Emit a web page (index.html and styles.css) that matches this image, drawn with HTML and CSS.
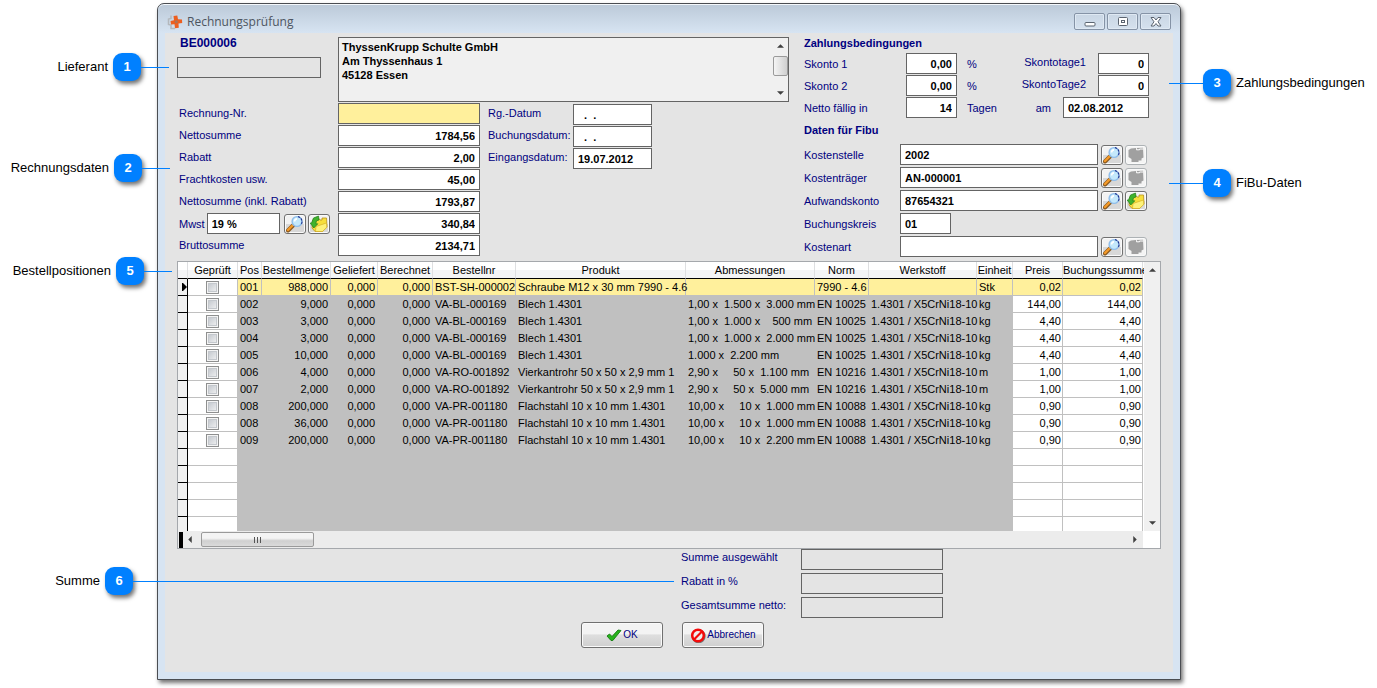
FILE: index.html
```html
<!DOCTYPE html>
<html lang="de">
<head>
<meta charset="utf-8">
<title>Rechnungsprüfung</title>
<link rel="stylesheet" href="styles.css">
</head>
<body>
<svg class="defs" aria-hidden="true">
  <defs>
    <symbol id="lens" viewBox="0 0 20 18">
      <path d="M3 15.5 8.5 10" stroke="#8a5a20" stroke-width="4" stroke-linecap="round"/>
      <path d="M3 15 8 10" stroke="#f59a28" stroke-width="2.4" stroke-linecap="round"/>
      <circle cx="12" cy="6.5" r="4.9" fill="#c4e8fb" stroke="#8fbdea" stroke-width="1.4"/>
      <path d="M13 1.6a5.2 5.2 0 0 1 3.4 7.6" fill="none" stroke="#1c2f8c" stroke-width="1.1" stroke-dasharray="2.4 1"/>
      <path d="M9.6 6.5a2.6 2.6 0 0 1 2.4-2.6" fill="none" stroke="#fff" stroke-width="1.6"/>
    </symbol>
    <symbol id="folder" viewBox="0 0 20 18">
      <path d="M4 4.5 10 3.5 11 5h2V3h4.500l.5 9-4.500 4.500H6L3 13z" fill="#f7df3c" stroke="#b9921c" stroke-width=".8"/>
      <path d="M7 11.500 17.500 8 17.800 12.500 13.500 16.500H6.500z" fill="#fdf27a" stroke="#d0a820" stroke-width=".6"/>
      <path d="M9.500 1 4.500 3 2.500 8H1.200l3.600 5 4-4.200H6.800L7.500 5.800 10 5z" fill="#3fb32c" stroke="#1f7d18" stroke-width=".7"/>
    </symbol>
    <symbol id="folder-off" viewBox="0 0 20 18">
      <path d="M2.500 4 5 2.500 10 2 17 1.800 17.500 11.500 15.500 12.500v2h-3v1.500H5.500V13L2.500 11z" fill="#a0a0a0"/>
      <path d="M10.500 2.200v1.600h3V3H17" fill="none" stroke="#fff" stroke-width="1"/>
    </symbol>
  </defs>
</svg>

<main class="window">
  <header class="titlebar">
    <svg class="logo" viewBox="0 0 16 16" aria-hidden="true">
      <path d="M4 1.500v3L1.500 5v5.500L4 11v3.500h4" fill="none" stroke="#b4b8bd" stroke-width="1.500"/>
      <path d="M6.500 2 10.300 1.500 11 5.300 15 5.500 15.200 9l-3.700.5.300 4.300-3.800.5L7.500 10.300 4 10.500 3.500 7 7 6.300z" fill="#ec5f20"/>
      <circle cx="9.300" cy="7.800" r="1.500" fill="#a9745a"/>
    </svg>
    <h1 class="caption">Rechnungsprüfung</h1>
    <div class="winbuttons">
      <button class="winbtn" aria-label="Minimieren"><svg viewBox="0 0 14 12"><rect x="2" y="6.500" width="10" height="3.500" rx="1" fill="#fff" stroke="#5b6470"/></svg></button>
      <button class="winbtn" aria-label="Maximieren"><svg viewBox="0 0 14 12"><rect x="2.500" y="1.500" width="9" height="8" rx="1" fill="#fff" stroke="#5b6470"/><rect x="5.500" y="4.500" width="3" height="2" fill="#fff" stroke="#5b6470"/></svg></button>
      <button class="winbtn" aria-label="Schließen"><svg viewBox="0 0 14 12"><path d="M2 1.500h3L7 4l2-2.500h3L9 5.800l3 4.200H9L7 7.500 5 10H2l3-4.200z" fill="#fff" stroke="#5b6470"/></svg></button>
    </div>
  </header>

  <form class="client">
    <div class="top">
      <section class="invoice">
        <div class="supplier">
          <div class="supplier-id">
            <label class="heading order" for="lieferant">BE000006</label>
            <input class="field flat" id="lieferant">
          </div>
          <div class="address">
            <textarea class="address-text" aria-label="Adresse" readonly>ThyssenKrupp Schulte GmbH
Am Thyssenhaus 1
45128 Essen</textarea>
            <div class="vscroll small">
              <svg class="arrow" viewBox="0 0 8 4"><path d="M0 4 4 0l4 4z"/></svg>
              <div class="vthumb"></div>
              <svg class="arrow last" viewBox="0 0 8 4"><path d="M0 0h8L4 4z"/></svg>
            </div>
          </div>
        </div>
        <div class="figures">
          <div class="sums">
            <label for="renr">Rechnung-Nr.</label><input class="field num current" id="renr">
            <label for="netto">Nettosumme</label><input class="field num" id="netto" value="1784,56">
            <label for="rabatt">Rabatt</label><input class="field num" id="rabatt" value="2,00">
            <label for="fracht">Frachtkosten usw.</label><input class="field num" id="fracht" value="45,00">
            <label for="inkl">Nettosumme (inkl. Rabatt)</label><input class="field num" id="inkl" value="1793,87">
            <div class="vat">
              <label for="mwst">Mwst</label><input class="field" id="mwst" value="19 %">
              <button type="button" class="tool" aria-label="Mwst suchen"><svg><use href="#lens"/></svg></button>
              <button type="button" class="tool" aria-label="Mwst öffnen"><svg><use href="#folder"/></svg></button>
            </div><input class="field num" aria-label="Mwst Betrag" value="340,84">
            <label for="brutto">Bruttosumme</label><input class="field num" id="brutto" value="2134,71">
          </div>
          <div class="dates">
            <label for="rgdatum">Rg.-Datum</label><input class="field" id="rgdatum" value="  .  .">
            <label for="budatum">Buchungsdatum:</label><input class="field" id="budatum" value="  .  .">
            <label for="eidatum">Eingangsdatum:</label><input class="field" id="eidatum" value="19.07.2012">
          </div>
        </div>
      </section>

      <section class="terms">
        <h2 class="heading">Zahlungsbedingungen</h2>
        <div class="payment">
          <label for="sk1">Skonto 1</label><input class="field num" id="sk1" value="0,00"><span>%</span>
          <label class="end" for="st1">Skontotage1</label><input class="field num days" id="st1" value="0">
          <label for="sk2">Skonto 2</label><input class="field num" id="sk2" value="0,00"><span>%</span>
          <label class="end" for="st2">SkontoTage2</label><input class="field num days" id="st2" value="0">
          <label for="faellig">Netto fällig in</label><input class="field num" id="faellig" value="14"><span>Tagen</span>
          <div class="due"><label for="am">am</label><input class="field" id="am" value="02.08.2012"></div>
        </div>
        <h2 class="heading fibu-title">Daten für Fibu</h2>
        <div class="fibu">
          <label for="kst">Kostenstelle</label>
          <div class="pick"><input class="field" id="kst" value="2002"><button type="button" class="tool" aria-label="Kostenstelle suchen"><svg><use href="#lens"/></svg></button><button type="button" class="tool" disabled aria-label="Kostenstelle öffnen"><svg><use href="#folder-off"/></svg></button></div>
          <label for="ktr">Kostenträger</label>
          <div class="pick"><input class="field" id="ktr" value="AN-000001"><button type="button" class="tool" aria-label="Kostenträger suchen"><svg><use href="#lens"/></svg></button><button type="button" class="tool" disabled aria-label="Kostenträger öffnen"><svg><use href="#folder-off"/></svg></button></div>
          <label for="akt">Aufwandskonto</label>
          <div class="pick"><input class="field" id="akt" value="87654321"><button type="button" class="tool" aria-label="Aufwandskonto suchen"><svg><use href="#lens"/></svg></button><button type="button" class="tool" aria-label="Aufwandskonto öffnen"><svg><use href="#folder"/></svg></button></div>
          <label for="bkr">Buchungskreis</label>
          <div class="pick"><input class="field brief" id="bkr" value="01"></div>
          <label for="kart">Kostenart</label>
          <div class="pick"><input class="field" id="kart"><button type="button" class="tool" aria-label="Kostenart suchen"><svg><use href="#lens"/></svg></button><button type="button" class="tool" disabled aria-label="Kostenart öffnen"><svg><use href="#folder-off"/></svg></button></div>
        </div>
      </section>
    </div>

    <section class="grid">
      <div class="grid-main">
        <table class="items">
          <colgroup><col class="c-mark"><col class="c-check"><col class="c-pos"><col class="c-qty"><col class="c-del"><col class="c-inv"><col class="c-no"><col class="c-prod"><col class="c-dim"><col class="c-norm"><col class="c-mat"><col class="c-unit"><col class="c-price"><col class="c-sum"></colgroup>
          <thead><tr><th></th><th>Geprüft</th><th>Pos</th><th>Bestellmenge</th><th>Geliefert</th><th>Berechnet</th><th>Bestellnr</th><th>Produkt</th><th>Abmessungen</th><th>Norm</th><th>Werkstoff</th><th>Einheit</th><th>Preis</th><th>Buchungssumme</th></tr></thead>
          <tbody id="rows"></tbody>
        </table>
        <div class="vscroll">
          <svg class="arrow" viewBox="0 0 8 4"><path d="M0 4 4 0l4 4z"/></svg>
          <svg class="arrow last" viewBox="0 0 8 4"><path d="M0 0h8L4 4z"/></svg>
        </div>
      </div>
      <div class="hscroll">
        <span class="split"></span>
        <svg class="side" viewBox="0 0 4 8"><path d="M4 0v8L0 4z"/></svg>
        <div class="hthumb"><i></i><i></i><i></i></div>
        <svg class="side last" viewBox="0 0 4 8"><path d="M0 0v8l4-4z"/></svg>
      </div>
    </section>

    <section class="totals">
      <label for="t1">Summe ausgewählt</label><input class="field flat" id="t1">
      <label for="t2">Rabatt in %</label><input class="field flat" id="t2">
      <label for="t3">Gesamtsumme netto:</label><input class="field flat" id="t3">
    </section>

    <div class="actions">
      <button type="button" class="push">
        <svg class="push-icon" viewBox="0 0 16 14" aria-hidden="true"><path d="M1 7.500 3.500 5.500 6 8 12 1.500l3 .5L6.800 12H5z" fill="#27b31c" stroke="#137a10" stroke-width=".9" stroke-linejoin="round"/></svg>OK</button>
      <button type="button" class="push">
        <svg class="push-icon" viewBox="0 0 16 15" aria-hidden="true"><circle cx="8.600" cy="8.300" r="5.800" fill="none" stroke="#777" stroke-width="2.500"/><circle cx="8" cy="7.500" r="5.800" fill="#eee" stroke="#f40b0b" stroke-width="2.500"/><path d="m4 11.500 8-8" stroke="#f40b0b" stroke-width="2.200"/></svg>Abbrechen</button>
    </div>
  </form>
</main>

<div class="callout c1"><span class="callout-label">Lieferant</span><b class="badge">1</b><i class="line"></i></div>
<div class="callout c2"><span class="callout-label">Rechnungsdaten</span><b class="badge">2</b><i class="line"></i></div>
<div class="callout right c3"><i class="line"></i><b class="badge">3</b><span class="callout-label">Zahlungsbedingungen</span></div>
<div class="callout right c4"><i class="line"></i><b class="badge">4</b><span class="callout-label">FiBu-Daten</span></div>
<div class="callout c5"><span class="callout-label">Bestellpositionen</span><b class="badge">5</b><i class="line"></i></div>
<div class="callout c6"><span class="callout-label">Summe</span><b class="badge">6</b><i class="line"></i></div>
<script src="rows.js"></script>
</body>
</html>
```
FILE: rows.js
```js
const items = [
  ["001", "988,000", "BST-SH-000002", "Schraube M12 x 30 mm 7990 - 4.6", "", "7990 - 4.6", "", "Stk", "0,02"],
  ["002", "9,000", "VA-BL-000169", "Blech 1.4301", "1,00 x  1.500 x  3.000 mm", "EN 10025", "1.4301 / X5CrNi18-10", "kg", "144,00"],
  ["003", "3,000", "VA-BL-000169", "Blech 1.4301", "1,00 x  1.000 x    500 mm", "EN 10025", "1.4301 / X5CrNi18-10", "kg", "4,40"],
  ["004", "3,000", "VA-BL-000169", "Blech 1.4301", "1,00 x  1.000 x  2.000 mm", "EN 10025", "1.4301 / X5CrNi18-10", "kg", "4,40"],
  ["005", "10,000", "VA-BL-000169", "Blech 1.4301", "1.000 x  2.200 mm", "EN 10025", "1.4301 / X5CrNi18-10", "kg", "4,40"],
  ["006", "4,000", "VA-RO-001892", "Vierkantrohr 50 x 50 x 2,9 mm 1", "2,90 x     50 x  1.100 mm", "EN 10216", "1.4301 / X5CrNi18-10", "m", "1,00"],
  ["007", "2,000", "VA-RO-001892", "Vierkantrohr 50 x 50 x 2,9 mm 1", "2,90 x     50 x  5.000 mm", "EN 10216", "1.4301 / X5CrNi18-10", "m", "1,00"],
  ["008", "200,000", "VA-PR-001180", "Flachstahl 10 x 10 mm 1.4301", "10,00 x     10 x  1.000 mm", "EN 10088", "1.4301 / X5CrNi18-10", "kg", "0,90"],
  ["008", "36,000", "VA-PR-001180", "Flachstahl 10 x 10 mm 1.4301", "10,00 x     10 x  1.000 mm", "EN 10088", "1.4301 / X5CrNi18-10", "kg", "0,90"],
  ["009", "200,000", "VA-PR-001180", "Flachstahl 10 x 10 mm 1.4301", "10,00 x     10 x  2.200 mm", "EN 10088", "1.4301 / X5CrNi18-10", "kg", "0,90"]
];
const body = document.getElementById("rows");
const cell = (text, cls) => `<td class="${cls}">${text}</td>`;
items.forEach(([pos, qty, no, prod, dim, norm, mat, unit, price], i) => {
  const mark = i === 0 ? '<svg class="pointer" viewBox="0 0 5 8"><path d="M0 0h1l4 4-4 4H0z"/></svg>' : "";
  body.insertAdjacentHTML("beforeend", `<tr class="${i === 0 ? "active" : ""}">` +
    cell(mark, "mark") +
    cell(`<input type="checkbox" class="tick" aria-label="Position ${pos} geprüft">`, "check") +
    cell(pos, "grey") + cell(qty, "grey r") + cell("0,000", "grey r") + cell("0,000", "grey r") +
    [no, prod, dim, norm, mat, unit].map(t => cell(t, "grey")).join("") +
    cell(price, "r edit") + cell(price, "r edit") + "</tr>");
});
for (let i = 0; i < 5; i++) {
  body.insertAdjacentHTML("beforeend", '<tr class="blank"><td class="mark"></td><td class="check"></td>' +
    '<td class="grey" colspan="10"></td><td class="edit"></td><td class="edit"></td></tr>');
}
```
FILE: styles.css
```css
* { box-sizing: border-box; }
body {
  position: relative;
  margin: 0;
  padding: 3px 196px 8px 157px;
  background: #fff;
  color: #000;
  font: 11px/14px "Liberation Sans", Arial, sans-serif;
}
.defs { position: absolute; width: 0; height: 0; }
button, input, textarea { font: inherit; margin: 0; }
label, .payment span { color: #000080; white-space: nowrap; }

.window {
  border: 1px solid #4a4d52;
  border-radius: 7px 7px 0 0;
  padding: 0 7px 7px;
  background: #d7e4f2;
  box-shadow: inset 0 1px #f4f8fc, 2px 3px 4px rgba(0, 0, 0, .55);
}
.titlebar {
  display: flex;
  align-items: center;
  height: 28px;
  margin: 1px -7px 0;
  padding: 5px 9px 0;
  border-radius: 6px 6px 0 0;
  background: linear-gradient(#bccad9, #d7e4f2);
}
.logo { width: 16px; height: 16px; }
.caption {
  flex: 1;
  margin: 0 0 0 4px;
  color: #4d5560;
  font: 12px/16px "Open Sans", "Noto Sans", sans-serif;
}
.winbuttons { display: flex; gap: 2px; }
.winbtn {
  display: flex;
  align-items: center;
  justify-content: center;
  width: 31px;
  height: 17px;
  padding: 0;
  border: 1px solid #8593a6;
  border-radius: 2px;
  background: linear-gradient(#c9d6e4, #d5e1ee);
  box-shadow: inset 0 0 0 1px #dfe9f3;
}
.winbtn svg { width: 14px; height: 12px; }

.client { padding: 4px 12px 24px; background: #e4e4e4; }
.heading { margin: 0; color: #000080; font-size: 11px; font-weight: 700; line-height: 12px; }
.field {
  height: 21px;
  min-width: 0;
  width: 100%;
  padding: 0 4px;
  border: 1px solid #646464;
  border-radius: 0;
  background: #fff;
  color: #000;
  font-weight: 700;
  white-space: pre;
}
.field.num { text-align: right; }
.field.current { background: #fff09c; }
.field.flat { background: #e4e4e4; }

.top { display: grid; grid-template-columns: minmax(0, 1fr) 345px; gap: 15px; padding-right: 12px; }
.supplier { display: grid; grid-template-columns: 144px minmax(0, 1fr); gap: 17px; }
.supplier-id { display: flex; flex-direction: column; gap: 8px; }
.order { padding-left: 3px; font-size: 12px; }
.address { display: flex; height: 65px; border: 1px solid #646464; background: #f0f0f0; }
.address-text {
  flex: 1;
  min-width: 0;
  padding: 2px 3px;
  border: 0;
  background: transparent;
  color: #000;
  font-weight: 700;
  line-height: 14px;
  resize: none;
  overflow: hidden;
}
.vscroll {
  display: flex;
  flex: none;
  flex-direction: column;
  align-items: center;
  width: 16px;
  padding: 6px 0;
  background: #f0f0f0;
}
.vscroll.small { gap: 8px; }
.arrow { width: 7px; height: 4px; fill: #404040; }
.arrow.last { margin-top: auto; }
.vthumb {
  width: 15px;
  height: 20px;
  border: 1px solid #9a9a9a;
  border-radius: 2px;
  background: linear-gradient(90deg, #f4f4f4, #cfcfcf);
}

.figures { display: flex; gap: 8px; margin-top: 1px; }
.sums { display: grid; grid-template-columns: 161px 142px; grid-auto-rows: 21px; row-gap: 1px; align-items: center; }
.sums > label { padding: 0 0 2px 2px; }
.vat { display: flex; align-items: center; padding-left: 2px; gap: 2px; }
.vat .field { width: 73px; margin-right: 2px; }
.dates { display: grid; grid-template-columns: 85px 79px; grid-auto-rows: 21px; gap: 1px 0; align-items: center; align-content: start; padding-top: 1px; }
.dates label { padding-bottom: 4px; }

.tool {
  flex: none;
  width: 22px;
  height: 20px;
  padding: 0;
  border: 1px solid #707070;
  border-radius: 3px;
  background: linear-gradient(#f2f2f2 50%, #d8d8d8 50%);
  box-shadow: inset 0 0 0 1px #fafafa;
}
.tool:disabled { border-color: #adb2b5; background: #f4f4f4; }
.tool svg { display: block; width: 20px; height: 18px; }

.payment {
  display: grid;
  grid-template-columns: 102px 51px 54px minmax(0, 1fr) 51px;
  grid-auto-rows: 21px;
  row-gap: 1px;
  align-items: center;
  margin-top: 4px;
}
.payment span { padding-left: 10px; }
.end { justify-self: end; padding: 0 12px 4px 0; }
.due { display: flex; grid-column: 4 / 6; align-items: center; justify-content: flex-end; gap: 12px; }
.due .field { width: 86px; }
.fibu-title { margin-top: 6px; }
.fibu { display: grid; grid-template-columns: 96px minmax(0, 1fr); row-gap: 2px; align-items: center; margin-top: 8px; padding-right: 2px; }
.pick { display: flex; align-items: center; gap: 2px; }
.pick .field:not(:last-child) { margin-right: 1px; }
.pick .brief { width: 51px; }

.grid { margin-top: 4px; border: 1px solid #a5a8ac; background: #fff; }
.grid-main { display: flex; gap: 1px; }
.items { flex: 1; width: 100%; min-width: 0; table-layout: fixed; border-collapse: separate; border-spacing: 0; }
.c-mark { width: 10px; }
.c-check { width: 50px; }
.c-pos { width: 24px; }
.c-qty { width: 69px; }
.c-del { width: 47px; }
.c-inv { width: 55px; }
.c-no { width: 83px; }
.c-dim { width: 129px; }
.c-norm { width: 54px; }
.c-mat { width: 108px; }
.c-unit { width: 36px; }
.c-price { width: 50px; }
.c-sum { width: 80px; }
.items th {
  height: 17px;
  padding: 0;
  border-right: 1px solid #dedfe1;
  border-bottom: 1px solid #000;
  background: linear-gradient(#fff 50%, #f3f4f6 50%);
  font-weight: 400;
  line-height: 14px;
  white-space: nowrap;
}
.items td {
  height: 17px;
  padding: 0 2px;
  border-right: 1px solid #c0c0c0;
  border-bottom: 1px solid #c0c0c0;
  line-height: 16px;
  white-space: pre;
}
.items .grey { background: #c0c0c0; }
.items .r { text-align: right; }
.items .edit { padding-right: 1px; }
.items .mark { padding: 0; border-right: 1px solid #000; border-bottom: 1px solid #000; background: #f0f0f0; }
.items .check { padding: 0; text-align: center; background: #fff; }
.items .active .grey, .items .active .edit { background: #fff09c; }
.items .blank:last-child td { height: 14px; border-bottom: 0; }
.pointer { display: block; width: 5px; height: 8px; margin-left: 4px; }
.tick {
  appearance: none;
  display: block;
  width: 13px;
  height: 13px;
  margin: 0 auto;
  border: 1px solid #8e8f8f;
  background: linear-gradient(135deg, #bcc1c8, #f6f6f6);
  box-shadow: inset 0 0 0 1px #f4f4f4, inset 0 0 0 2px #c4c8cd;
}
.hscroll { display: flex; align-items: center; height: 17px; margin-right: 17px; padding-right: 6px; background: #ececec; }
.split { width: 4px; height: 16px; margin: 0 5px 0 1px; background: #000; }
.side { width: 4px; height: 7px; fill: #404040; }
.side.last { margin-left: auto; }
.hthumb {
  display: flex;
  align-items: center;
  justify-content: center;
  gap: 2px;
  width: 113px;
  height: 15px;
  margin-left: 9px;
  border: 1px solid #9a9a9a;
  border-radius: 2px;
  background: linear-gradient(#f4f4f4 40%, #d0d0d0 60%, #dadada);
}
.hthumb i { width: 1px; height: 6px; background: #555; }

.totals {
  display: grid;
  grid-template-columns: 120px 142px;
  grid-auto-rows: 21px;
  row-gap: 3px;
  justify-content: center;
  padding-left: 286px;
}
.totals label { padding-top: 1px; }
.actions { display: flex; justify-content: center; gap: 19px; margin-top: 4px; padding-left: 7px; }
.push {
  display: flex;
  align-items: center;
  justify-content: center;
  gap: 1px;
  width: 82px;
  height: 26px;
  padding: 0;
  border: 1px solid #707070;
  border-radius: 3px;
  background: linear-gradient(#f3f3f3 45%, #dedede 50%, #cfcfcf);
  box-shadow: inset 0 0 0 1px #fafafa;
  color: #000080;
  font-size: 10px;
}
.push-icon { width: 16px; height: 15px; }

.callout { position: absolute; left: 0; display: flex; align-items: center; font-size: 13px; line-height: 16px; }
.callout-label { width: 108px; margin-right: 5px; text-align: right; white-space: nowrap; }
.badge {
  width: 28px;
  height: 28px;
  border-radius: 9px;
  background: #0080ff;
  box-shadow: 2px 3px 4px rgba(0, 0, 0, .55);
  color: #fff;
  font-size: 13px;
  line-height: 28px;
  text-align: center;
}
.line { width: 28px; height: 1px; background: #0080ff; }
.c1 { top: 53px; }
.c2 { top: 154px; }
.c2 .callout-label { width: 109px; }
.c5 { top: 257px; }
.c5 .callout-label { width: 111px; }
.c6 { top: 567px; }
.c6 .callout-label { width: 100px; }
.c6 .line { width: 541px; }
.right { left: auto; right: 0; width: 208px; }
.right .line { width: 34px; }
.right .callout-label { width: auto; margin: 0 0 0 5px; }
.c3 { top: 69px; }
.c4 { top: 169px; }
```
